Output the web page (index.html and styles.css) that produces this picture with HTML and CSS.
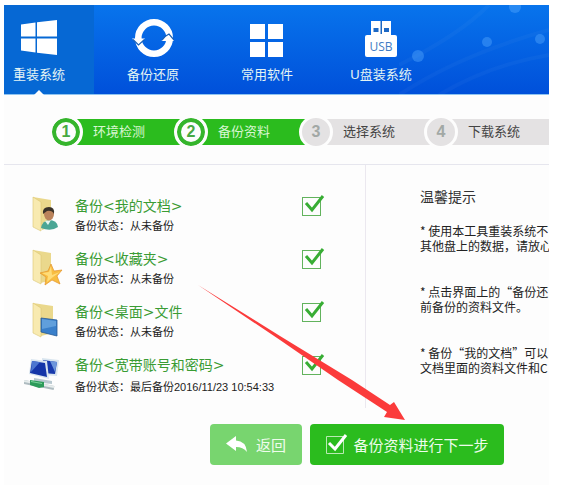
FILE: index.html
```
<!DOCTYPE html>
<html lang="zh-CN">
<head>
    <meta charset="UTF-8">
    <meta name="viewport" content="width=device-width, initial-scale=1.0">
    <title>重装系统</title>
    <link rel="stylesheet" href="styles.css">
</head>
<body>

<div class="app">
    <header class="header">
        <svg class="header-dots" width="150" height="90" viewBox="0 0 150 90" aria-hidden="true">
            <path d="M0 90Q60 50 150 25M40 90Q90 60 150 50M0 60Q60 30 90 0" fill="none" stroke="#fff" stroke-opacity=".03" stroke-width="4"/>
            <g fill="#5aacff" fill-opacity=".4">
                <circle cx="116" cy="2" r="6"/>
                <circle cx="88" cy="37" r="5"/>
                <circle cx="141" cy="34" r="5"/>
                <circle cx="19" cy="51" r="6"/>
            </g>
        </svg>
        <nav class="nav">
            <a class="nav-item active" href="#">
                <svg width="40" height="40" viewBox="0 0 40 40" fill="#fff">
                    <path d="M2 6.500L16.500 4.500V18.500H2zM18 4.300L38 2V18.500H18zM2 20.500H16.500V34.500L2 32.500zM18 20.500H38V37L18 34.700z"/>
                </svg>
                <span>重装系统</span>
            </a>
            <a class="nav-item" href="#">
                <svg width="42" height="40" viewBox="0 0 42 40">
                    <circle cx="22" cy="20" r="15.700" fill="none" stroke="#fff" stroke-width="6.600"/>
                    <path d="M0 20.500H13L6.500 27zM42 23H29.500L37 15z" fill="#fff"/>
                    <path d="M1 21.500L6.500 27L12.500 21.500M42 22L37 16L33 18.500L30 22" fill="none" stroke="#1a62b8" stroke-width="1.200"/>
                </svg>
                <span>备份还原</span>
            </a>
            <a class="nav-item" href="#">
                <svg width="40" height="40" viewBox="0 0 40 40" fill="#fff">
                    <path d="M3 6h15v15H3zM21 6h15v15H21zM3 24h15v15H3zM21 24h15v15H21z"/>
                </svg>
                <span>常用软件</span>
            </a>
            <a class="nav-item" href="#">
                <svg width="40" height="40" viewBox="0 0 40 40">
                    <path d="M10 3h20v14H10z" fill="#fff"/>
                    <rect x="4" y="17" width="32" height="22" rx="2" fill="#fff"/>
                    <path d="M19.500 3h1.500v13h-1.500zM12.500 10h5v4h-5zM23 10h5v4h-5z" fill="#1d68c4"/>
                    <text class="usb-text" x="20" y="33" text-anchor="middle">USB</text>
                </svg>
                <span>U盘装系统</span>
            </a>
        </nav>
    </header>

    <ol class="steps">
        <li class="step done"><span class="step-num">1</span><span class="step-label">环境检测</span></li>
        <li class="step done"><span class="step-num">2</span><span class="step-label">备份资料</span></li>
        <li class="step"><span class="step-num">3</span><span class="step-label">选择系统</span></li>
        <li class="step"><span class="step-num">4</span><span class="step-label">下载系统</span></li>
    </ol>

    <main class="content">
        <div class="backup-list">
            <div class="backup-item">
                <svg width="40" height="40" viewBox="0 0 40 40" aria-hidden="true">
                    <path d="M9 1l18 3v27l-9 3z" fill="#ead88c"/>
                    <path d="M9 1l8 5v29l-8-4z" fill="#f8eab0" stroke="#dcc673" stroke-width=".6"/>
                    <path d="M17 32Q18 25 25 24Q33 24 34 31Q27 36 17 32z" fill="#4ba695"/>
                    <path d="M21 25l3 4 3-5z" fill="#e6f4ef"/>
                    <ellipse cx="25" cy="18" rx="5" ry="6.500" fill="#ba835b"/>
                    <path d="M19 18Q18 11 25 11Q31 11 30 18Q28 14 23 15z" fill="#393229"/>
                </svg>
                <div class="backup-text">
                    <label class="backup-name" for="docs">备份&lt;我的文档&gt;</label>
                    <p class="backup-status">备份状态：从未备份</p>
                </div>
                <div class="check">
                    <input type="checkbox" id="docs" checked>
                    <svg width="23" height="23" viewBox="0 0 23 23"><path d="M4 9L10 16L21 2" fill="none" stroke="#38ad34" stroke-width="3"/></svg>
                </div>
            </div>
            <div class="backup-item">
                <svg width="40" height="40" viewBox="0 0 40 40" aria-hidden="true">
                    <path d="M9 1l18 3v27l-10 3z" fill="#ead88c"/>
                    <path d="M9 1l8 5v29l-8-4z" fill="#f8eab0" stroke="#dcc673" stroke-width=".6"/>
                    <path d="M27 15l3 7 8-1-5 6 3 8-8-4-7 5 1-8-6-4 8-2z" fill="#f8bd40" stroke="#e4942a" stroke-width=".7"/>
                    <path d="M27 17l1 9 8-3-7 5-6 5 1-6-6-3 7-1z" fill="#ffdc78"/>
                </svg>
                <div class="backup-text">
                    <label class="backup-name" for="favorites">备份&lt;收藏夹&gt;</label>
                    <p class="backup-status">备份状态：从未备份</p>
                </div>
                <div class="check">
                    <input type="checkbox" id="favorites" checked>
                    <svg width="23" height="23" viewBox="0 0 23 23"><path d="M4 9L10 16L21 2" fill="none" stroke="#38ad34" stroke-width="3"/></svg>
                </div>
            </div>
            <div class="backup-item">
                <svg width="40" height="40" viewBox="0 0 40 40" aria-hidden="true">
                    <path d="M9 1l20 3v27l-12 3z" fill="#ead88c"/>
                    <path d="M9 1l8 5v29l-8-4z" fill="#f8eab0" stroke="#dcc673" stroke-width=".6"/>
                    <path d="M17 16l16 2v16l-16-4z" fill="#397fca" stroke="#265994" stroke-width=".8"/>
                    <path d="M18 17l14 2v5l-14 3z" fill="#609fdc"/>
                </svg>
                <div class="backup-text">
                    <label class="backup-name" for="desktop">备份&lt;桌面&gt;文件</label>
                    <p class="backup-status">备份状态：从未备份</p>
                </div>
                <div class="check">
                    <input type="checkbox" id="desktop" checked>
                    <svg width="23" height="23" viewBox="0 0 23 23"><path d="M4 9L10 16L21 2" fill="none" stroke="#38ad34" stroke-width="3"/></svg>
                </div>
            </div>
            <div class="backup-item">
                <svg width="40" height="40" viewBox="0 0 40 40" aria-hidden="true">
                    <path d="M18 3l17 2-2 16-14-1z" fill="#d9e5ef"/>
                    <path d="M19 5l14 2-2 12-12-1z" fill="#183aac"/>
                    <path d="M26 6l7 1-2 10z" fill="#6c96dc"/>
                    <path d="M7 4l16 2 2 18L5 19z" fill="#d9e5ef"/>
                    <path d="M8 6l13 2 2 14L6 18z" fill="#1435a8"/>
                    <path d="M8 6l8 1-9 10z" fill="#4b76d0"/>
                    <path d="M10 23l18 3v3l-18-2z" fill="#b8c8d0"/>
                    <path d="M0 27l30 6" stroke="#aebbc0" stroke-width="4"/>
                    <path d="M0 26l30 6" stroke="#e6ecec" stroke-width="2"/>
                    <path d="M6 25l14 2v5l-5 1-9-3z" fill="#2d9b5a"/>
                    <path d="M7 26l11 2v1l-11-2z" fill="#7bd39b"/>
                </svg>
                <div class="backup-text">
                    <label class="backup-name" for="accounts">备份&lt;宽带账号和密码&gt;</label>
                    <p class="backup-status saved">备份状态：最后备份2016/11/23 10:54:33</p>
                </div>
                <div class="check">
                    <input type="checkbox" id="accounts" checked>
                    <svg width="23" height="23" viewBox="0 0 23 23"><path d="M4 9L10 16L21 2" fill="none" stroke="#38ad34" stroke-width="3"/></svg>
                </div>
            </div>
        </div>

        <aside class="tips">
            <h2>温馨提示</h2>
            <p>* 使用本工具重装系统不<br>其他盘上的数据，请放心</p>
            <p>* 点击界面上的“备份还<br>前备份的资料文件。</p>
            <p>* 备份“我的文档”可以<br>文档里面的资料文件和C</p>
        </aside>
    </main>

    <div class="actions">
        <button class="btn btn-back" type="button">
            <svg width="22" height="18" viewBox="0 0 22 18"><path d="M0 7.500L10 0V4.500Q20 5 21 16Q17 11 10 11V15z" fill="#fff"/></svg>
            返回
        </button>
        <button class="btn btn-next" type="button">
            <svg width="23" height="23" viewBox="0 0 23 23" fill="none"><path d="M1.500 3.500h17v17h-17z" stroke="#b9eab3"/><path d="M4 10L10 16L21 2" stroke="#fff" stroke-width="3"/></svg>
            备份资料进行下一步
        </button>
    </div>

    <svg class="pointer" width="208" height="136" viewBox="0 0 208 136" aria-hidden="true">
        <path d="M0 0L82 51L154 95L192 120L196 117L207 135L186 132L189 127L140 95L82 55z" fill="#fb3b3b"/>
    </svg>
</div>

</body>
</html>
```
FILE: styles.css
```
body {
    font-family: "Liberation Sans", "Noto Sans CJK SC", sans-serif;
    font-size: 12px;
    color: #222;
    background-color: #fff;
    margin: 5px 12px 0 4px;
}
.app {
    position: relative;
    background-color: #fdfdfd;
    overflow: hidden;
}

/* top navigation */
.header {
    position: relative;
    height: 90px;
    background: linear-gradient(#0874ec, #0050da);
    border-bottom: 1px solid #8fc4f0;
    box-sizing: border-box;
}
.header-dots {
    position: absolute;
    top: 0;
    right: 0;
}
.nav {
    display: flex;
    gap: 4px;
    height: 100%;
    margin-left: -20px;
}
.nav-item {
    position: relative;
    flex: 0 0 110px;
    display: flex;
    flex-direction: column;
    align-items: center;
    gap: 7px;
    padding-top: 13px;
    box-sizing: border-box;
    color: #e4f4f4;
    font-size: 13px;
    line-height: 20px;
    text-decoration: none;
}
.nav-item.active {
    background-color: #0668d4;
}
.nav-item.active::after {
    content: "";
    position: absolute;
    bottom: -1px;
    border: 5px solid transparent;
    border-top: none;
    border-bottom-color: #fdfdfd;
}
.usb-text {
    font-family: "Open Sans", sans-serif;
    font-size: 12px;
    fill: #3f7cc4;
}

/* progress steps */
.steps {
    display: flex;
    list-style: none;
    margin: 0;
    padding: 20px 0 15px 45px;
    overflow: hidden;
}
.step {
    display: flex;
    align-items: center;
    flex: 0 0 125px;
}
.step-num {
    position: relative;
    z-index: 1;
    width: 34px;
    height: 34px;
    box-sizing: border-box;
    border: 3px solid #fdfdfd;
    border-radius: 50%;
    background-color: #e4e2e3;
    color: #a2a8a5;
    font-size: 16px;
    font-weight: bold;
    line-height: 28px;
    text-align: center;
}
.step-label {
    flex: 1;
    margin: 0 -17px;
    padding-left: 27px;
    background-color: #e4e2e3;
    color: #444;
    font-size: 13px;
    line-height: 26px;
    white-space: nowrap;
}
.done .step-num {
    background-color: #fdfdfd;
    box-shadow: inset 0 0 0 4px #35b52c;
    color: #47a943;
}
.done .step-label {
    background-color: #2bbc1e;
    color: #d8f6d2;
}

/* backup list and tips */
.content {
    display: flex;
    border-top: 1px solid #e6e6ee;
}
.backup-list {
    flex: 0 0 362px;
    box-sizing: border-box;
    padding: 31px 44px 0 20px;
    border-right: 1px solid #ebe8ef;
}
.backup-item {
    display: flex;
    gap: 11px;
    height: 53px;
}
.backup-text {
    flex: 1;
    white-space: nowrap;
}
.backup-name {
    display: block;
    font-family: "DejaVu Sans", "Noto Sans CJK SC", sans-serif;
    color: #3a9c34;
    font-size: 14px;
    line-height: 20px;
}
.backup-status {
    margin: 0;
    font-size: 11px;
    line-height: 20px;
}
.backup-status.saved {
    line-height: 24px;
}
.check {
    position: relative;
    width: 19px;
    height: 20px;
}
.check input {
    appearance: none;
    display: block;
    width: 19px;
    height: 19px;
    margin: 1px 0 0;
    border: 1px solid #62b35d;
}
.check svg {
    position: absolute;
    top: -2px;
    left: 0;
    pointer-events: none;
}
.check input:not(:checked) + svg {
    display: none;
}
.tips {
    flex: 1;
    min-width: 0;
    padding: 21px 0 0 54px;
    font-family: "Noto Sans CJK SC", sans-serif;
    white-space: nowrap;
    overflow: hidden;
}
.tips h2 {
    margin: 0 0 17px;
    color: #333;
    font-size: 14px;
    font-weight: normal;
    line-height: 20px;
}
.tips p {
    margin: 0 0 31px;
    line-height: 15px;
}

/* bottom buttons */
.actions {
    display: flex;
    gap: 8px;
    padding: 16px 0 20px 206px;
}
.btn {
    display: flex;
    align-items: center;
    justify-content: center;
    gap: 8px;
    height: 41px;
    padding: 0 15px;
    border: none;
    border-radius: 4px;
    color: #eefcec;
    font-family: inherit;
    font-size: 15px;
    white-space: nowrap;
    cursor: pointer;
}
.btn-back {
    width: 92px;
    background-color: #78d56f;
}
.btn-next {
    width: 194px;
    gap: 5px;
    background-color: #2bbc1e;
}
.pointer {
    position: absolute;
    top: 280px;
    left: 194px;
    pointer-events: none;
}
```
